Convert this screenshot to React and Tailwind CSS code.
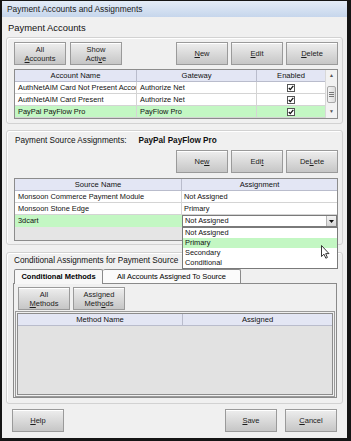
import React from 'react';

const font = { fontFamily: '"Liberation Sans", Arial, sans-serif' };

const U = ({ children }) => <span className="underline underline-offset-1">{children}</span>;

const Btn = ({ children, className = '' }) => (
  <div
    className={`flex h-[23px] w-[52px] shrink-0 flex-col items-center justify-center border border-[#9a9a9a] bg-gradient-to-b from-[#eeeeee] to-[#c6c6c6] text-center text-[7.5px] leading-[9px] text-[#1c1c1c] shadow-[inset_0_1px_0_#ffffff] ${className}`}
  >
    {children}
  </div>
);

const Check = () => (
  <svg width="8" height="8" viewBox="0 0 8 8">
    <rect x="0.5" y="0.5" width="7" height="7" fill="#fff" stroke="#555" />
    <path d="M1.8 4 L3.3 5.6 L6.3 1.8" fill="none" stroke="#111" strokeWidth="1.3" />
  </svg>
);

const Panel = ({ children, className = '' }) => (
  <div className={`rounded-[3px] border border-[#d2d2d2] bg-[#f0f0f0] shadow-[inset_1px_1px_0_#ffffff] ${className}`}>
    {children}
  </div>
);

const accounts = [
  { name: 'AuthNetAIM Card Not Present Account', gateway: 'Authorize Net' },
  { name: 'AuthNetAIM Card Present', gateway: 'Authorize Net' },
  { name: 'PayPal PayFlow Pro', gateway: 'PayFlow Pro', selected: true },
];

const sources = [
  { name: 'Monsoon Commerce Payment Module', assignment: 'Not Assigned' },
  { name: 'Monsoon Stone Edge', assignment: 'Primary' },
];

const options = ['Not Assigned', 'Primary', 'Secondary', 'Conditional'];

export default function App() {
  return (
    <div style={font} className="h-[441px] w-[351px] overflow-hidden bg-[#151515]">
      <div className="ml-[2px] mt-[1px] flex h-[437px] w-[345px] flex-col bg-[#f0f0f0]">
        {/* title bar */}
        <div className="flex h-[16px] items-center bg-gradient-to-b from-[#e4ecf7] to-[#c6d6ec] pl-[5px] text-[8.4px] text-[#1a1a1a]">
          Payment Accounts and Assignments
        </div>

        <div className="flex flex-1 flex-col px-[4px]">
          <div className="flex h-[20px] items-center pl-[2px] pt-[2px] text-[9.4px] text-[#111]">Payment Accounts</div>

          {/* payment accounts */}
          <Panel className="h-[87px] pl-[7px] pr-[4px] pt-[4px]">
            <div className="flex gap-[4px]">
              <Btn>
                <span>All</span>
                <span><U>A</U>ccounts</span>
              </Btn>
              <Btn>
                <span>Show</span>
                <span>Acti<U>v</U>e</span>
              </Btn>
              <div className="flex-1" />
              <div className="flex gap-[3px]">
                <Btn><span><U>N</U>ew</span></Btn>
                <Btn><span><U>E</U>dit</span></Btn>
                <Btn><span><U>D</U>elete</span></Btn>
              </div>
            </div>
            <div className="mt-[4px] flex h-[50px] border border-[#8c8c8c] bg-white text-[7.4px] text-[#111]">
              <div className="flex-1">
                <div className="grid h-[12px] grid-cols-[122px_120px_1fr] border-b border-[#b9bccc] bg-[#e3e6f4] text-[7.6px] leading-[11px]">
                  <div className="border-r border-[#b9bccc] text-center">Account Name</div>
                  <div className="border-r border-[#b9bccc] text-center">Gateway</div>
                  <div className="text-center">Enabled</div>
                </div>
                {accounts.map((a) => (
                  <div
                    key={a.name}
                    className={`grid h-[12px] grid-cols-[122px_120px_1fr] border-b border-[#d4d4d4] leading-[11px] ${a.selected ? 'bg-[#c3f7c3]' : 'bg-white'}`}
                  >
                    <div className="overflow-hidden whitespace-nowrap border-r border-[#d4d4d4] pl-[3px]">{a.name}</div>
                    <div className="overflow-hidden whitespace-nowrap border-r border-[#d4d4d4] pl-[3px]">{a.gateway}</div>
                    <div className="flex items-center justify-center"><Check /></div>
                  </div>
                ))}
              </div>
              {/* scrollbar */}
              <div className="flex w-[12px] flex-col border-l border-[#d8d8d8] bg-[#f2f2f2]">
                <div className="flex h-[12px] items-center justify-center text-[5px] text-[#555]">▲</div>
                <div className="flex flex-1 items-center px-[1px]">
                  <div className="flex h-[17px] w-full flex-col items-center justify-center gap-[1px] rounded-[2px] border border-[#a8a8a8] bg-gradient-to-r from-[#f4f4f4] to-[#dcdcdc]">
                    <div className="h-px w-[5px] bg-[#777]" />
                    <div className="h-px w-[5px] bg-[#777]" />
                    <div className="h-px w-[5px] bg-[#777]" />
                  </div>
                </div>
                <div className="flex h-[12px] items-center justify-center text-[5px] text-[#555]">▼</div>
              </div>
            </div>
          </Panel>

          {/* payment source assignments */}
          <Panel className="mt-[6px] h-[115px] pl-[7px] pr-[4px]">
            <div className="flex h-[19px] items-center pl-[1px] pt-[1px] text-[8.2px] text-[#111]">
              <span>Payment Source Assignments:</span>
              <span className="ml-[12px] font-bold">PayPal PayFlow Pro</span>
            </div>
            <div className="flex justify-end gap-[3px]">
              <Btn><span>Ne<U>w</U></span></Btn>
              <Btn><span>Edi<U>t</U></span></Btn>
              <Btn><span>De<U>L</U>ete</span></Btn>
            </div>
            <div className="relative mt-[5px] h-[63px] border border-[#8c8c8c] bg-[#e5e5e5] text-[7.4px] text-[#111]">
              <div className="grid h-[12px] grid-cols-[167px_1fr] border-b border-[#b9bccc] bg-[#e3e6f4] text-[7.6px] leading-[11px]">
                <div className="border-r border-[#b9bccc] text-center">Source Name</div>
                <div className="text-center">Assignment</div>
              </div>
              {sources.map((s) => (
                <div key={s.name} className="grid h-[12px] grid-cols-[167px_1fr] border-b border-[#d4d4d4] bg-white leading-[11px]">
                  <div className="overflow-hidden whitespace-nowrap border-r border-[#d4d4d4] pl-[3px]">{s.name}</div>
                  <div className="pl-[2px]">{s.assignment}</div>
                </div>
              ))}
              <div className="grid h-[12px] grid-cols-[167px_1fr] border-b border-[#d4d4d4] leading-[11px]">
                <div className="bg-[#c3f7c3] pl-[3px]">3dcart</div>
                <div className="flex items-center border border-[#7a7a7a] bg-white pl-[2px] leading-[10px]">
                  <span className="flex-1">Not Assigned</span>
                  <div className="flex h-full w-[10px] items-center justify-center border-l border-[#b5b5b5] bg-gradient-to-b from-[#f4f4f4] to-[#d6d6d6]">
                    <svg width="5" height="3" viewBox="0 0 5 3"><path d="M0 0 H5 L2.5 3 Z" fill="#111" /></svg>
                  </div>
                </div>
              </div>

              {/* open dropdown list */}
              <div className="absolute left-[167px] right-[-1px] top-[48px] z-10 border border-[#7a7a7a] bg-white text-[7.4px] leading-[10px]">
                {options.map((o) => (
                  <div key={o} className={`h-[10px] pl-[2px] ${o === 'Primary' ? 'bg-[#c3f7c3]' : ''}`}>{o}</div>
                ))}
                <svg className="absolute left-[138px] top-[17px]" width="9" height="14" viewBox="0 0 9 14">
                  <path d="M0.5 0.5 V11.5 L3 9.2 L4.8 13.2 L6.4 12.5 L4.7 8.6 H8 Z" fill="#fff" stroke="#222" strokeWidth="0.9" strokeLinejoin="round" />
                </svg>
              </div>
            </div>
          </Panel>

          {/* conditional assignments */}
          <Panel className="mt-[7px] h-[152px] pl-[6px] pr-[5px]">
            <div className="flex h-[15px] items-center pl-[1px] pt-[2px] text-[8.2px] text-[#111]">
              Conditional Assignments for Payment Source
            </div>
            <div className="flex h-[15px] items-end pl-[1px] text-[7.5px]">
              <div className="relative z-[1] -mb-px flex h-[15px] w-[89px] items-center justify-center rounded-t-[2px] border border-b-0 border-[#8a8a8a] bg-[#f7f7f7] font-bold">
                Conditional Methods
              </div>
              <div className="flex h-[14px] w-[138px] items-center justify-center rounded-t-[2px] border border-b-0 border-l-0 border-[#8a8a8a] bg-[#fbfbfb]">
                All Accounts Assigned To Source
              </div>
            </div>
            <div className="h-[115px] border border-[#8a8a8a] bg-[#f0f0f0] px-[3px] pt-[3px]">
              <div className="flex gap-[3px] pl-[1px]">
                <Btn>
                  <span>All</span>
                  <span><U>M</U>ethods</span>
                </Btn>
                <Btn>
                  <span>Assigned</span>
                  <span>Meth<U>o</U>ds</span>
                </Btn>
              </div>
              <div className="mt-[3px] h-[82px] border border-[#8c8c8c] bg-[#e2e2e2] text-[7.6px] text-[#111] outline outline-1 outline-offset-1 outline-[#9a9a9a]">
                <div className="grid h-[12px] grid-cols-[165px_1fr] border-b border-[#b9bccc] bg-[#e3e6f4] leading-[11px]">
                  <div className="border-r border-[#b9bccc] text-center">Method Name</div>
                  <div className="text-center">Assigned</div>
                </div>
              </div>
            </div>
          </Panel>

          {/* footer */}
          <div className="mt-[5px] flex pl-[6px] pr-[6px]">
            <Btn className="h-[22px]"><span><U>H</U>elp</span></Btn>
            <div className="flex-1" />
            <div className="flex gap-[8px]">
              <Btn className="h-[22px]"><span><U>S</U>ave</span></Btn>
              <Btn className="h-[22px]"><span><U>C</U>ancel</span></Btn>
            </div>
          </div>
        </div>
      </div>
    </div>
  );
}
